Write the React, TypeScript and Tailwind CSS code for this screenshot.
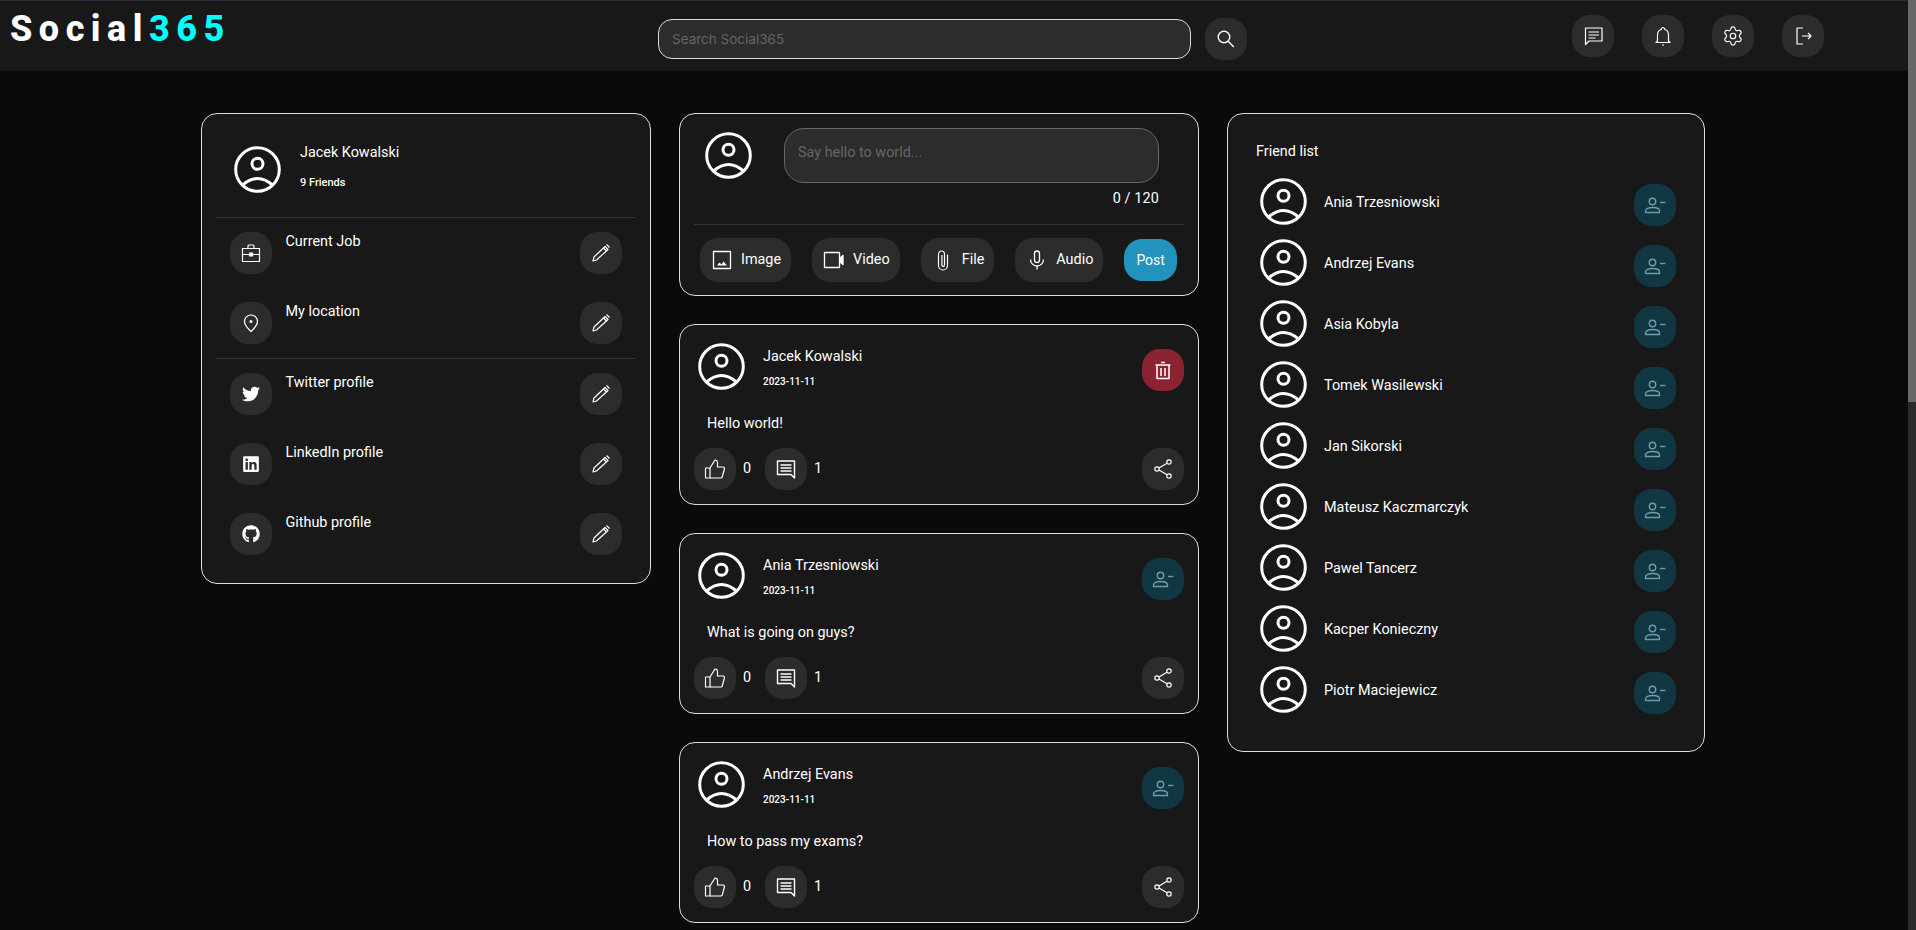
import type { ReactNode } from "react"
import { FaGithub, FaLinkedin, FaTwitter } from "react-icons/fa"
import { Settings } from "lucide-react"

const friends = [
  "Ania Trzesniowski",
  "Andrzej Evans",
  "Asia Kobyla",
  "Tomek Wasilewski",
  "Jan Sikorski",
  "Mateusz Kaczmarczyk",
  "Pawel Tancerz",
  "Kacper Konieczny",
  "Piotr Maciejewicz",
]

const posts = [
  { author: "Jacek Kowalski", text: "Hello world!", own: true },
  { author: "Ania Trzesniowski", text: "What is going on guys?", own: false },
  { author: "Andrzej Evans", text: "How to pass my exams?", own: false },
]

function Line({ children, width = 1.2 }: { children: ReactNode; width?: number }) {
  return (
    <svg viewBox="0 0 24 24" width={24} height={24} fill="none" stroke="currentColor" strokeWidth={width} strokeLinejoin="round">
      {children}
    </svg>
  )
}

const ChatIcon = () => (
  <Line>
    <path d="M4.5 4H21v13H8l-3.5 3.5z" />
    <path d="M7.5 8h10.5M7.5 11h10.5M7.5 14h7" />
  </Line>
)
const BellIcon = () => (
  <Line>
    <path d="M12 3.5a1.6 1.6 0 0 1 1.6 1.8c2.4.8 3.9 3 3.9 5.7v6l1.5 1.5H5l1.5-1.5v-6c0-2.7 1.5-4.9 3.9-5.7A1.6 1.6 0 0 1 12 3.5z" />
    <path d="M11 21h2" />
  </Line>
)
const LogoutIcon = () => (
  <Line>
    <path d="M12 4H6v16h6" />
    <path d="M11 12h9M17 9l3 3-3 3" />
  </Line>
)
const SearchIcon = () => (
  <Line width={1.4}>
    <circle cx="10" cy="10" r="5.8" />
    <path d="M14.2 14.2l5.6 5.8" />
  </Line>
)
const EditIcon = () => (
  <Line>
    <path d="M4 20l1-4L16 5.500l3 3L7.500 19z" />
    <path d="M14.500 7l3 3" />
    <path d="M17.500 3.500l3 3" />
  </Line>
)
const JobIcon = () => (
  <Line>
    <rect x="3.5" y="7.5" width="17" height="13" />
    <path d="M9 7.5V5a1 1 0 0 1 1-1h4a1 1 0 0 1 1 1v2.5" />
    <path d="M3.5 13.5h6.5M14 13.5h6.5" />
    <rect x="10.5" y="12" width="3" height="3" fill="currentColor" />
  </Line>
)
const PinIcon = () => (
  <Line>
    <path d="M12 20.5s-6.5-6-6.5-10a6.5 6.5 0 0 1 13 0c0 4-6.5 10-6.5 10z" />
    <circle cx="12" cy="10.5" r="1" fill="currentColor" />
  </Line>
)
const TrashIcon = () => (
  <Line width={1.5}>
    <path d="M6 7h12v13.5H6zM4.5 7h15M10 4.5h4M10 10v8M14 10v8" />
  </Line>
)
const ThumbIcon = () => (
  <Line>
    <rect x="2.5" y="11" width="4.5" height="10" />
    <path d="M7 11l5-8c1.5 0 2.5 1 2.5 2.5V10h5.5a1.5 1.5 0 0 1 1.4 2l-2.2 8a1.5 1.5 0 0 1-1.4 1H7" />
  </Line>
)
const CommentIcon = () => (
  <Line width={1.4}>
    <path d="M3.5 4h17v17L17 17.5H3.5z" />
    <path d="M6.5 8h11M6.5 11h11M6.5 14h11" />
  </Line>
)
const ShareIcon = () => (
  <Line>
    <circle cx="18" cy="5" r="2.2" />
    <circle cx="6" cy="12" r="2.2" />
    <circle cx="18" cy="19" r="2.2" />
    <path d="M8 11l8-4.8M8 13l8 4.8" />
  </Line>
)
const RemoveIcon = () => (
  <Line width={1.4}>
    <circle cx="9.5" cy="8.5" r="3.2" />
    <path d="M2.5 19.5V18c0-2.2 3.2-3.5 7-3.5s7 1.3 7 3.5v1.500z" />
    <path d="M17 9.500h5.500" />
  </Line>
)
const ImageIcon = () => (
  <Line width={1.3}>
    <rect x="3.500" y="3.500" width="17" height="17" />
    <path d="M7 17.500l2.500-3 2 2 2-3 3.500 4z" fill="currentColor" stroke="none" />
  </Line>
)
const VideoIcon = () => (
  <Line width={1.3}>
    <rect x="2.500" y="4.500" width="15" height="15" />
    <path d="M18 10l3-2.500v9L18 14z" fill="currentColor" />
  </Line>
)
const ClipIcon = () => (
  <Line>
    <path d="M16.500 6.500v11a4.500 4.500 0 0 1-9 0V6a3 3 0 0 1 6 0v11a1.300 1.300 0 0 1-2.600 0V7" />
  </Line>
)
const MicIcon = () => (
  <Line width={1.3}>
    <rect x="9.500" y="3" width="5" height="11.500" rx="2.500" />
    <path d="M5.500 11.500a6.500 6.500 0 0 0 13 0M12 18v3.500" />
  </Line>
)

function Avatar() {
  return (
    <svg viewBox="0 0 55 55" width={55} height={55} fill="none" stroke="white" strokeWidth={3} className="shrink-0">
      <circle cx="27.5" cy="27.5" r="21.800" />
      <circle cx="27.5" cy="21.800" r="5.500" />
      <path d="M12.500 43Q27.500 30 42.500 43" />
    </svg>
  )
}

function IconButton({ children, className = "" }: { children: ReactNode; className?: string }) {
  return (
    <button className={`flex h-[42px] w-[42px] shrink-0 items-center justify-center rounded-[18px] bg-[#2c2c2c] text-white ${className}`}>
      {children}
    </button>
  )
}

function RemoveFriendButton({ className = "" }: { className?: string }) {
  return (
    <button className={`flex h-[42px] w-[42px] shrink-0 items-center justify-center rounded-[18px] bg-[#113743] text-[#6b9dab] ${className}`}>
      <RemoveIcon />
    </button>
  )
}

function ProfileRow({ icon, label }: { icon: ReactNode; label: string }) {
  return (
    <div className="flex items-start px-[28px]">
      <IconButton>{icon}</IconButton>
      <span className="ml-[13.500px] flex-1 pt-px text-[14.4px] leading-[18px]">{label}</span>
      <IconButton>
        <EditIcon />
      </IconButton>
    </div>
  )
}

function MediaButton({ icon, label }: { icon: ReactNode; label: string }) {
  return (
    <button className="flex h-[44px] items-center gap-[7px] rounded-[18px] bg-[#2c2c2c] px-[10px] text-[14.4px] text-white">
      {icon}
      {label}
    </button>
  )
}

function Post({ author, text, own }: { author: string; text: string; own: boolean }) {
  return (
    <article className="rounded-2xl border border-[#dcdcdc] bg-[#181818]">
      <div className="flex items-start pt-[14px] pr-[14px] pl-[14px]">
        <Avatar />
        <div className="ml-[14px] flex-1 pt-[8px]">
          <div className="text-[14.4px] leading-[20px]">{author}</div>
          <div className="mt-[7px] text-[10px] leading-[16px] font-medium">2023-11-11</div>
        </div>
        {own ? (
          <IconButton className="mt-[10px] !bg-[#8c2333]">
            <TrashIcon />
          </IconButton>
        ) : (
          <RemoveFriendButton className="mt-[10px]" />
        )}
      </div>
      <p className="mt-[20px] ml-[27px] text-[14.4px] leading-[20px]">{text}</p>
      <div className="mt-[14px] flex items-center pr-[14px] pb-[14px] pl-[14px] text-[14.4px]">
        <IconButton>
          <ThumbIcon />
        </IconButton>
        <span className="ml-[7px] w-[22px]">0</span>
        <IconButton>
          <CommentIcon />
        </IconButton>
        <span className="ml-[7px] flex-1">1</span>
        <IconButton>
          <ShareIcon />
        </IconButton>
      </div>
    </article>
  )
}

export default function App() {
  return (
    <div className="relative h-[930px] overflow-hidden bg-[#0a0a0a] font-['Roboto',sans-serif] text-white">
      <header className="flex h-[71px] items-start border-t border-[#2b2b3d] bg-[#181818]">
        <div className="w-[658px] pt-[7px] pl-[10px] text-[36px] leading-[42px] font-extrabold tracking-[6.500px]">
          Social<span className="text-[#00ffff]">365</span>
        </div>
        <input
          placeholder="Search Social365"
          className="mt-[18px] h-[40px] w-[533px] rounded-[14px] border border-[#dcdcdc] bg-[#2c2c2c] px-[13px] font-['Inter',sans-serif] text-[13.500px] text-white outline-none placeholder:text-[#666666]"
        />
        <IconButton className="mt-[17px] ml-[14px]">
          <SearchIcon />
        </IconButton>
        <div className="mt-[14px] ml-[325px] flex gap-[28px]">
          <IconButton>
            <ChatIcon />
          </IconButton>
          <IconButton>
            <BellIcon />
          </IconButton>
          <IconButton>
            <Settings size={22} strokeWidth={1.3} />
          </IconButton>
          <IconButton>
            <LogoutIcon />
          </IconButton>
        </div>
      </header>

      <main className="flex items-start gap-[28px] pt-[42px] pl-[201px]">
        <aside className="w-[450px] rounded-2xl border border-[#dcdcdc] bg-[#181818] pb-[28px]">
          <div className="flex items-start pt-[28px] pl-[28px]">
            <Avatar />
            <div className="ml-[15px] pt-px">
              <div className="text-[14.4px] leading-[20px]">Jacek Kowalski</div>
              <div className="mt-[12px] text-[11px] leading-[16px] font-medium">9 Friends</div>
            </div>
          </div>
          <div className="mx-[14px] mt-[20px] h-px bg-[#333333]" />
          <div className="mt-[14px] flex flex-col gap-[28px]">
            <ProfileRow icon={<JobIcon />} label="Current Job" />
            <ProfileRow icon={<PinIcon />} label="My location" />
          </div>
          <div className="mx-[14px] mt-[14px] h-px bg-[#333333]" />
          <div className="mt-[14px] flex flex-col gap-[28px]">
            <ProfileRow icon={<FaTwitter size={18} />} label="Twitter profile" />
            <ProfileRow icon={<FaLinkedin size={18} />} label="LinkedIn profile" />
            <ProfileRow icon={<FaGithub size={18} />} label="Github profile" />
          </div>
        </aside>

        <div className="flex w-[520px] flex-col gap-[28px]">
          <section className="rounded-2xl border border-[#dcdcdc] bg-[#181818] pb-[13px]">
            <div className="flex items-start pt-[14px] pl-[21px]">
              <Avatar />
              <textarea
                placeholder="Say hello to world..."
                className="ml-[28px] h-[55px] w-[375px] resize-none rounded-[20px] border border-[#666666] bg-[#2c2c2c] px-[13px] py-[15px] text-[14.4px] leading-[18px] text-white outline-none placeholder:text-[#666666]"
              />
            </div>
            <div className="mt-[7px] w-[479px] text-right text-[14.4px] leading-[18px] tracking-[0.135px]">0 / 120</div>
            <div className="mx-[14px] mt-[16px] h-px bg-[#333333]" />
            <div className="mt-[13px] flex items-center gap-[21px] pl-[20px]">
              <MediaButton icon={<ImageIcon />} label="Image" />
              <MediaButton icon={<VideoIcon />} label="Video" />
              <MediaButton icon={<ClipIcon />} label="File" />
              <MediaButton icon={<MicIcon />} label="Audio" />
              <button className="h-[42px] rounded-[18px] bg-[#2293bd] px-[12px] text-[14px] text-white">Post</button>
            </div>
          </section>
          {posts.map((post) => (
            <Post key={post.author} {...post} />
          ))}
        </div>

        <aside className="w-[478px] rounded-2xl border border-[#dcdcdc] bg-[#181818] px-[28px] pt-[28px] pb-[34px]">
          <h2 className="text-[14.4px] leading-[20px]">Friend list</h2>
          <ul className="mt-[12px] flex flex-col gap-[6px]">
            {friends.map((name) => (
              <li key={name} className="flex items-start">
                <Avatar />
                <span className="ml-[13px] flex-1 pt-[19px] text-[14.4px] leading-[20px]">{name}</span>
                <RemoveFriendButton className="mt-[10px]" />
              </li>
            ))}
          </ul>
        </aside>
      </main>

      {/* page scrollbar */}
      <div className="absolute top-0 right-0 h-full w-2 bg-[#2b2b2b]">
        <div className="h-[402px] w-full bg-[#686868]" />
      </div>
    </div>
  )
}
